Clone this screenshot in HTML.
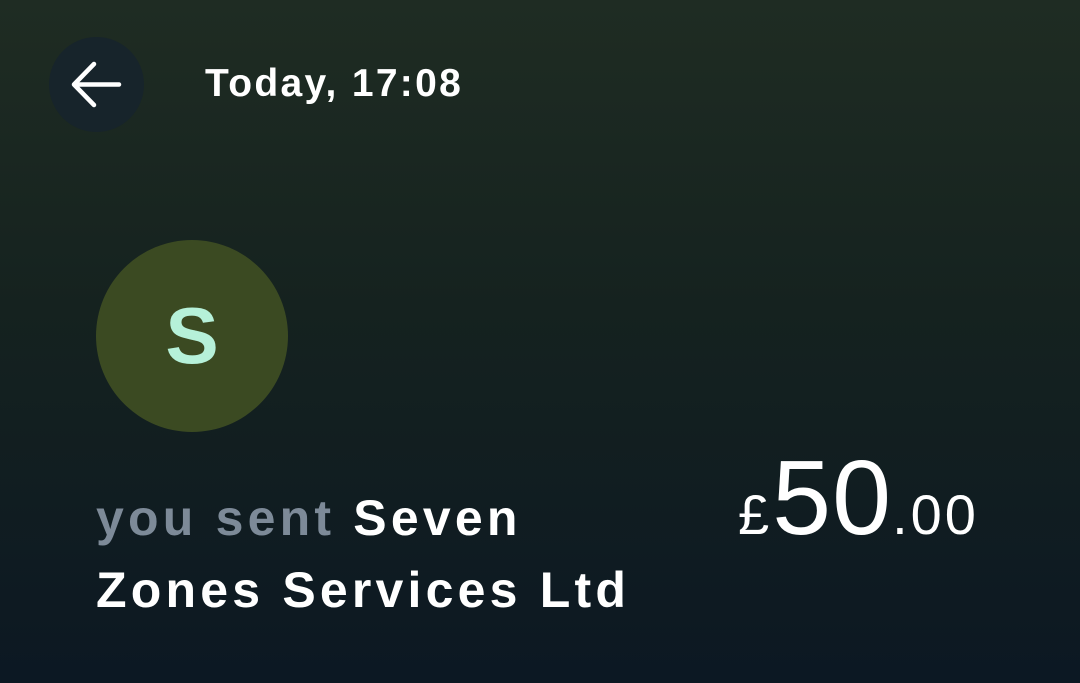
<!DOCTYPE html>
<html><head><style>
html,body{margin:0;padding:0}
body{width:1080px;height:683px;overflow:hidden;position:relative;background:linear-gradient(180deg,#1f2c23 0%,#15221f 45%,#0c1823 100%);font-family:"Liberation Sans",sans-serif;color:#fff}
.back{position:absolute;left:49px;top:37px;width:95px;height:95px;border-radius:50%;background:#17242b}
.time{position:absolute;left:205px;top:62px;font-size:39px;font-weight:bold;line-height:44px;letter-spacing:2.3px}
.av{position:absolute;left:96px;top:240px;width:192px;height:192px;border-radius:50%;background:#3b4a22;color:#b6f1d9;font-size:80px;text-align:center;line-height:192px;font-weight:bold}
.who{position:absolute;left:96px;top:482px;width:640px;font-size:50px;font-weight:bold;line-height:72px;letter-spacing:4.2px}
.who span{color:#7d8a98}
.amt{position:absolute;left:738px;top:443px;font-size:106px;line-height:110px;white-space:nowrap;letter-spacing:1px}
.amt small{font-size:56px;letter-spacing:3px}
</style></head><body>
<div class="back"><svg width="95" height="95" viewBox="0 0 95 95"><path d="M70 47.5H26M45 27L25 47.5L45 68" fill="none" stroke="#fff" stroke-width="4.5" stroke-linecap="round" stroke-linejoin="round"/></svg></div>
<div class="time">Today, 17:08</div>
<div class="av">S</div>
<div class="who"><span>you sent</span> Seven<br>Zones Services Ltd</div>
<div class="amt"><small>£</small>50<small>.00</small></div>
</body></html>
